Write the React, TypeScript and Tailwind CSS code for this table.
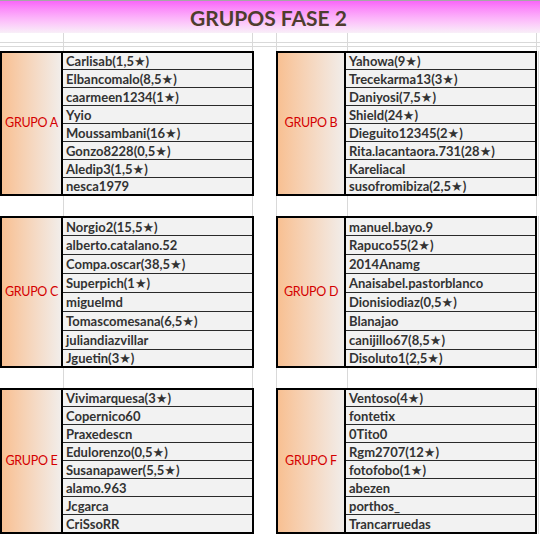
const groups = [
  {
    left: {
      name: 'GRUPO A',
      players: ['Carlisab(1,5★)', 'Elbancomalo(8,5★)', 'caarmeen1234(1★)', 'Yyio', 'Moussambani(16★)', 'Gonzo8228(0,5★)', 'Aledip3(1,5★)', 'nesca1979'],
    },
    right: {
      name: 'GRUPO B',
      players: ['Yahowa(9★)', 'Trecekarma13(3★)', 'Daniyosi(7,5★)', 'Shield(24★)', 'Dieguito12345(2★)', 'Rita.lacantaora.731(28★)', 'Kareliacal', 'susofromibiza(2,5★)'],
    },
    rows: [16, 17, 17, 17, 17, 17, 17, 16],
  },
  {
    left: {
      name: 'GRUPO C',
      players: ['Norgio2(15,5★)', 'alberto.catalano.52', 'Compa.oscar(38,5★)', 'Superpich(1★)', 'miguelmd', 'Tomascomesana(6,5★)', 'juliandiazvillar', 'Jguetin(3★)'],
    },
    right: {
      name: 'GRUPO D',
      players: ['manuel.bayo.9', 'Rapuco55(2★)', '2014Anamg', 'Anaisabel.pastorblanco', 'Dionisiodiaz(0,5★)', 'Blanajao', 'canijillo67(8,5★)', 'Disoluto1(2,5★)'],
    },
    rows: [17, 18, 18, 18, 18, 18, 18, 16],
  },
  {
    left: {
      name: 'GRUPO E',
      players: ['Vivimarquesa(3★)', 'Copernico60', 'Praxedescn', 'Edulorenzo(0,5★)', 'Susanapawer(5,5★)', 'alamo.963', 'Jcgarca', 'CriSsoRR'],
    },
    right: {
      name: 'GRUPO F',
      players: ['Ventoso(4★)', 'fontetix', '0Tito0', 'Rgm2707(12★)', 'fotofobo(1★)', 'abezen', 'porthos_', 'Trancarruedas'],
    },
    rows: [16, 17, 17, 17, 17, 17, 17, 17],
  },
]

function SpacerRow({ h, line }: { h: string; line?: boolean }) {
  return (
    <div className={`flex ${h} ${line ? 'border-b border-[#d9d9d9]' : ''}`}>
      <div className="w-[64px] shrink-0 border-r border-[#d9d9d9]" />
      <div className="w-[189px] shrink-0 border-r border-[#d9d9d9]" />
      <div className="w-[24px] shrink-0 border-r border-[#d9d9d9]" />
      <div className="w-[71px] shrink-0 border-r border-[#d9d9d9]" />
      <div className="w-[189px] shrink-0 border-r border-[#d9d9d9]" />
      <div className="flex-1" />
    </div>
  )
}

function GroupTable({
  name,
  players,
  rows,
  width,
  labelWidth,
}: {
  name: string
  players: string[]
  rows: number[]
  width: string
  labelWidth: string
}) {
  return (
    <div className={`flex shrink-0 ${width} border-2 border-black`}>
      <div
        className={`${labelWidth} shrink-0 flex items-center justify-center border-r-2 border-black bg-gradient-to-r from-[#f8c092] to-[#f1edea] text-[12.5px] tracking-[-0.3px] text-[#d40000]`}
      >
        {name}
      </div>
      <div className="flex-1 min-w-0 flex flex-col bg-[#f2f2f2]">
        {players.map((p, i) => {
          const last = i === players.length - 1
          return (
            <div
              key={p}
              style={{ height: rows[i] + (last ? 0 : 1) }}
              className={`flex items-center pl-[3px] pt-[1px] text-[13px] font-bold text-[#333] leading-none whitespace-nowrap overflow-hidden ${
                last ? '' : 'border-b border-[#2a2a2a]'
              }`}
            >
              {p}
            </div>
          )
        })}
      </div>
    </div>
  )
}

export default function App() {
  return (
    <div className="w-[540px] h-[536px] overflow-hidden bg-white font-['Lato','DejaVu_Sans',sans-serif]">
      <div className="h-px bg-[#a6a6a6]" />
      <div className="h-[32px] flex items-center justify-center pr-[3px] bg-gradient-to-b from-[#f865f8] to-[#f8eff8]">
        <span className="text-[21px] font-bold text-[#4e3d2d] leading-none">GRUPOS FASE 2</span>
      </div>
      <SpacerRow h="h-[10px]" line />
      <SpacerRow h="h-[4px]" line />
      <SpacerRow h="h-[4px]" />

      {groups.map((g, i) => (
        <div key={g.left.name}>
          <div className="flex">
            <GroupTable {...g.left} rows={g.rows} width="w-[254px]" labelWidth="w-[61px]" />
            <div className="w-[22px] shrink-0" />
            <GroupTable {...g.right} rows={g.rows} width="w-[261px]" labelWidth="w-[68px]" />
            <div className="flex-1 flex">
              <div className="ml-[1px] w-px bg-[#d9d9d9]" />
            </div>
          </div>
          {i < groups.length - 1 && <SpacerRow h="h-[20px]" />}
        </div>
      ))}
    </div>
  )
}
